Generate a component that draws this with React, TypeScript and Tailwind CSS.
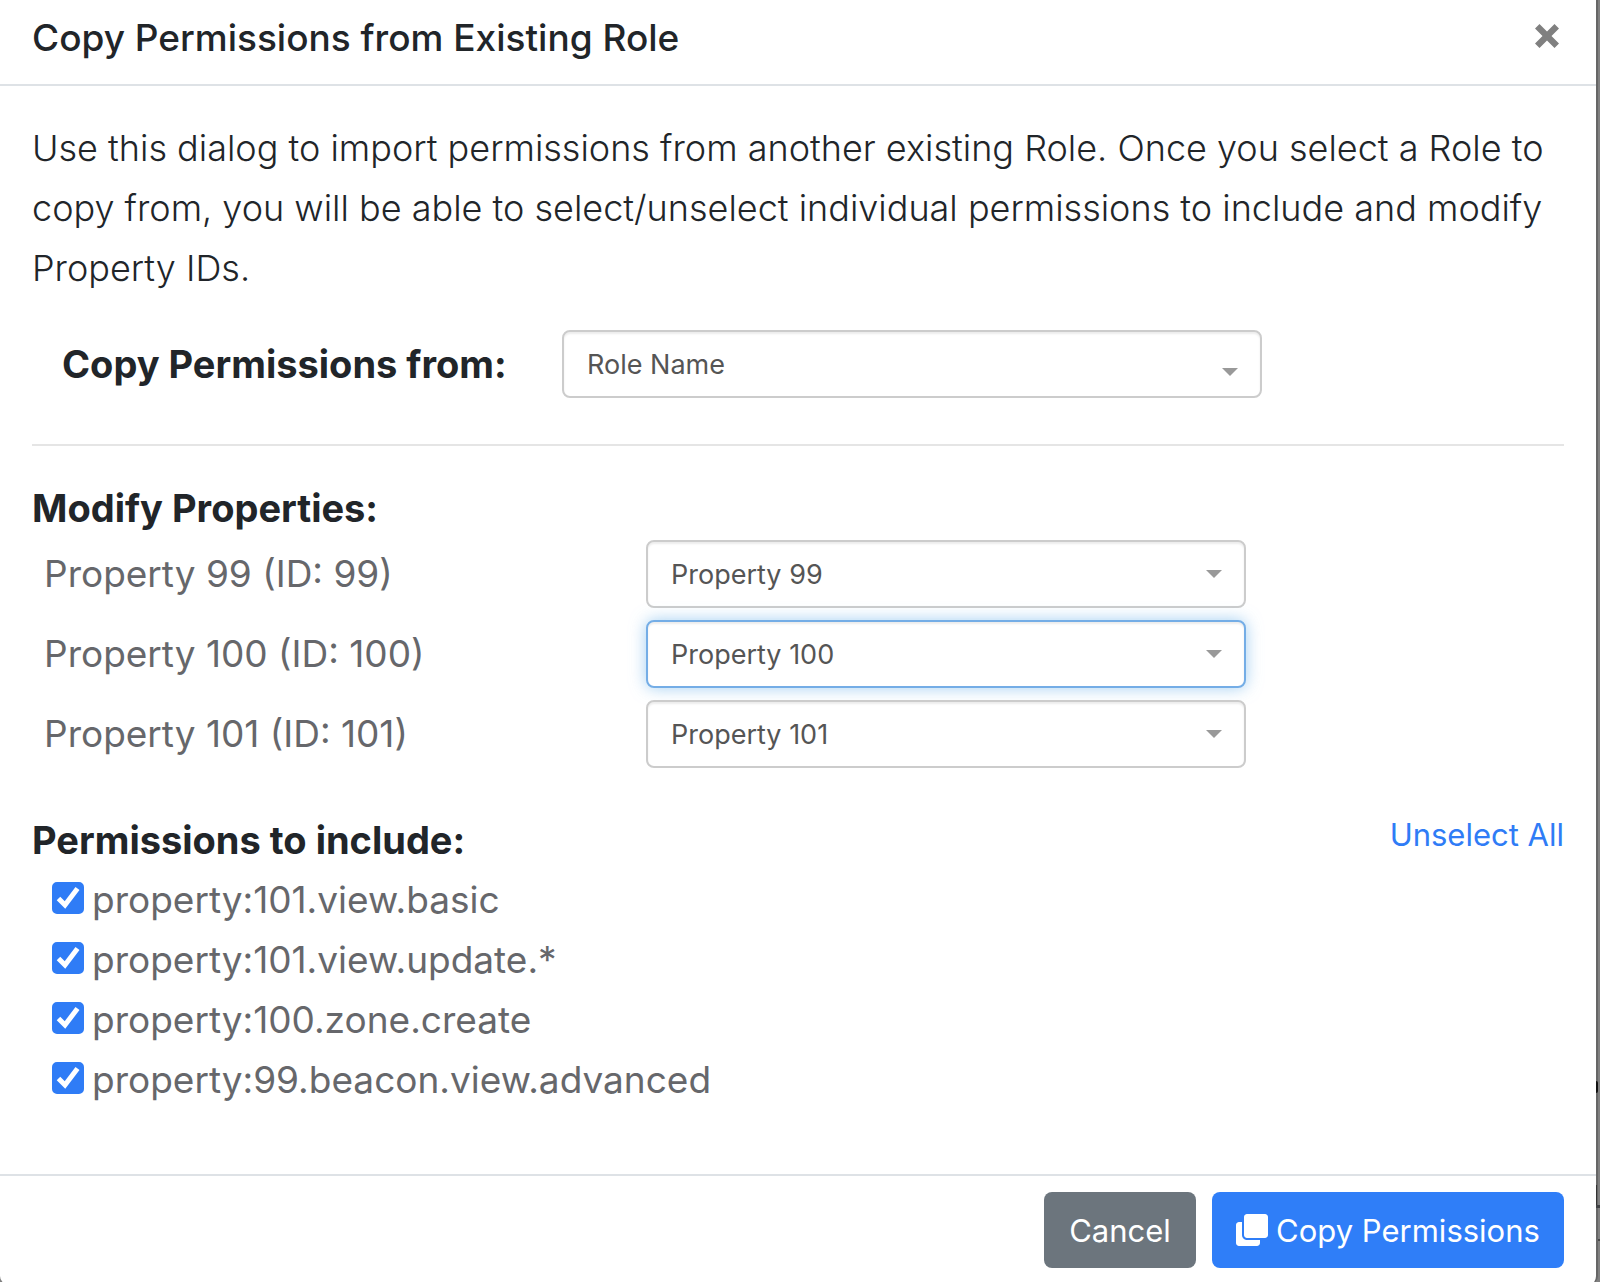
import { useId, useState } from "react";
import { FaClone } from "react-icons/fa";

const properties = [
  { id: 99, name: "Property 99" },
  { id: 100, name: "Property 100" },
  { id: 101, name: "Property 101" },
];

const permissions = [
  "property:101.view.basic",
  "property:101.view.update.*",
  "property:100.zone.create",
  "property:99.beacon.view.advanced",
];

type SelectBoxProps = {
  id: string;
  options: string[];
  initial: string;
  active?: boolean;
  lowArrow?: boolean;
};

function SelectBox({ id, options, initial, active, lowArrow }: SelectBoxProps) {
  const [value, setValue] = useState(initial);
  return (
    <div className="relative w-full">
      <select
        id={id}
        value={value}
        onChange={(e) => setValue(e.target.value)}
        className={
          "block h-[68px] w-full appearance-none rounded-lg border-2 bg-white pt-0.5 pr-16 pl-[23px] text-[27px] text-[#555] outline-none " +
          (active
            ? "border-[#74ade6] shadow-[inset_0_2px_2px_rgba(0,0,0,0.075),0_0_16px_rgba(102,175,233,0.6)]"
            : "border-[#ccc] shadow-[inset_0_2px_2px_rgba(0,0,0,0.075)]")
        }
      >
        {options.map((o) => (
          <option key={o}>{o}</option>
        ))}
      </select>
      <svg
        viewBox="0 0 16 8"
        aria-hidden="true"
        className={
          "pointer-events-none absolute h-2 w-4 fill-[#999] " +
          (lowArrow ? "top-[38px] right-6" : "top-[30px] right-6")
        }
      >
        <path d="M0 0h16L8 8z" />
      </svg>
    </div>
  );
}

function PermissionItem({
  name,
  checked,
  onChange,
}: {
  name: string;
  checked: boolean;
  onChange: () => void;
}) {
  const id = useId();
  return (
    <li className="flex h-[60px] items-start gap-2">
      <span className="relative mt-3 block size-8 shrink-0">
        <input
          id={id}
          type="checkbox"
          checked={checked}
          onChange={onChange}
          className="peer block size-8 appearance-none rounded-[5px] border-2 border-[#999] bg-white checked:border-[#2f7cf6] checked:bg-[#2f7cf6]"
        />
        <svg
          viewBox="0 0 32 32"
          aria-hidden="true"
          className="pointer-events-none absolute inset-0 hidden size-8 fill-none stroke-white peer-checked:block"
        >
          <path d="M6.500 16.500L13 23L25.500 6.500" strokeWidth="5" />
        </svg>
      </span>
      <label htmlFor={id} className="text-[37px] leading-[60px] text-[#66676b]">
        {name}
      </label>
    </li>
  );
}

export default function App() {
  const [selected, setSelected] = useState<string[]>(permissions);
  const toggle = (p: string) =>
    setSelected((s) => (s.includes(p) ? s.filter((x) => x !== p) : [...s, p]));

  return (
    <div className="relative h-screen overflow-hidden bg-[#808080] pr-0.5 font-['Inter',sans-serif] text-[#212529]">
      <div
        role="dialog"
        aria-labelledby="dialog-title"
        className="rounded-b-lg border-r-2 border-[#666] bg-white"
      >
        <header className="flex h-[86px] items-start justify-between border-b-2 border-[#dee2e6] px-8">
          <h1 id="dialog-title" className="text-[37px] leading-[76px] font-medium">
            Copy Permissions from Existing Role
          </h1>
          <button type="button" aria-label="Close" className="mt-6 mr-[5px]">
            <svg viewBox="0 0 24 24" aria-hidden="true" className="size-6 fill-[#808080]">
              <path d="M4.500 0L12 7.500L19.500 0L24 4.500L16.500 12L24 19.500L19.500 24L12 16.500L4.500 24L0 19.500L7.500 12L0 4.500z" />
            </svg>
          </button>
        </header>

        <main className="px-8 pt-8 pb-16">
          <p className="-mr-4 text-[36px] leading-[60px] font-light">
            Use this dialog to import permissions from another existing Role. Once you select a Role
            to copy from, you will be able to select/unselect individual permissions to include and
            modify Property IDs.
          </p>

          <div className="mt-8 flex items-center pl-[30px]">
            <label htmlFor="source-role" className="w-[500px] text-[38px] leading-[60px] font-bold">
              Copy Permissions from:
            </label>
            <div className="w-[700px]">
              <SelectBox id="source-role" options={["Role Name"]} initial="Role Name" lowArrow />
            </div>
          </div>

          <hr className="mt-[46px] border-t-2 border-[#e5e5e5]" />

          <section className="mt-8">
            <h2 className="text-[38px] leading-[60px] font-bold">Modify Properties:</h2>
            <div className="mt-0.5 flex flex-col gap-3">
              {properties.map((p) => (
                <div key={p.id} className="flex items-center pl-3">
                  <label
                    htmlFor={"property-" + p.id}
                    className="w-[602px] text-[37px] leading-[60px] text-[#66676b]"
                  >
                    {p.name} (ID: {p.id})
                  </label>
                  <div className="w-[600px]">
                    <SelectBox
                      id={"property-" + p.id}
                      options={properties.map((o) => o.name)}
                      initial={p.name}
                      active={p.id === 100}
                    />
                  </div>
                </div>
              ))}
            </div>
          </section>

          <section className="mt-[42px]">
            <div className="flex items-start justify-between">
              <h2 className="text-[38px] leading-[60px] font-bold">Permissions to include:</h2>
              <button
                type="button"
                onClick={() => setSelected([])}
                className="text-[31px] leading-[50px] text-[#2f7cf6]"
              >
                Unselect All
              </button>
            </div>
            <ul className="pl-5">
              {permissions.map((p) => (
                <PermissionItem
                  key={p}
                  name={p}
                  checked={selected.includes(p)}
                  onChange={() => toggle(p)}
                />
              ))}
            </ul>
          </section>
        </main>

        <footer className="flex justify-end gap-4 border-t-2 border-[#dee2e6] px-8 py-4 text-[31px] text-white">
          <button type="button" className="h-[76px] w-[152px] rounded-lg bg-[#6c757d] pt-0.5">
            Cancel
          </button>
          <button
            type="button"
            className="flex h-[76px] w-[352px] items-center justify-center gap-2 rounded-lg bg-[#2f7ef8]"
          >
            <FaClone className="size-8" aria-hidden="true" />
            <span className="pt-0.5">Copy Permissions</span>
          </button>
        </footer>
      </div>

      {/* Slivers of the dimmed page that show past the dialog's edge */}
      <div aria-hidden="true" className="pointer-events-none absolute top-0 right-0 h-full w-1">
        <span className="absolute top-[1081px] left-0 h-3 w-0.5 rounded-r-full bg-[#111]" />
        <span className="absolute top-[1185px] left-0 h-5 w-px bg-[#333]" />
        <span className="absolute top-[1205px] left-0 h-[3px] w-1 bg-[#3f4144]" />
        <span className="absolute top-[1239px] left-0.5 h-0.5 w-0.5 bg-[#4a4a4a]" />
      </div>
    </div>
  );
}
